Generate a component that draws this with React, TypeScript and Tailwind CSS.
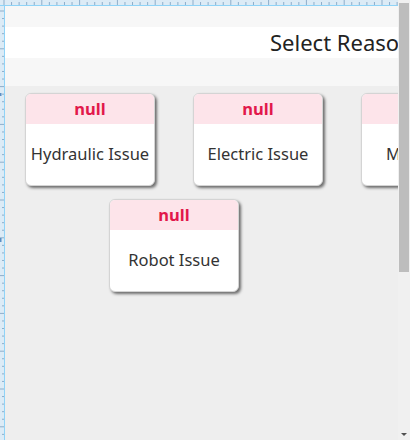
import React from 'react';

const reasons = [
  [{ label: 'Hydraulic Issue' }, { label: 'Electric Issue' }, { label: 'Misc Issue' }],
  [{ label: 'Robot Issue' }],
];

function TopRuler() {
  const ticks = [];
  for (let i = 0; i < 60; i++) {
    const x = 4 + i * 7.56;
    const major = i % 5 === 0;
    ticks.push(
      <line key={i} x1={x} x2={x} y1={major ? 0 : 2} y2={5} stroke="#8eaecb" strokeWidth={1} />,
    );
  }
  return (
    <svg width="410" height="6" className="block">
      <rect x="0" y="0" width="410" height="6" fill="#dcebf6" />
      {ticks}
      <line x1="0" x2="410" y1="5.5" y2="5.5" stroke="#8fd3f7" strokeWidth={1} />
    </svg>
  );
}

function LeftRuler() {
  const ticks = [];
  for (let i = 0; i < 100; i++) {
    const y = 5 + i * 7.56;
    const major = i % 5 === 0;
    ticks.push(
      <line key={i} y1={y} y2={y} x1={major ? 0 : 2} x2={4} stroke="#8eaecb" strokeWidth={1} />,
    );
  }
  return (
    <svg width="5" height="760" className="block">
      <rect x="0" y="0" width="5" height="760" fill="#dcebf6" />
      {ticks}
      <rect x="0" y="87" width="1.5" height="3" fill="#5b8fc4" />
      <rect x="0" y="232" width="1.5" height="4" fill="#5b8fc4" />
      <line x1="4.5" x2="4.5" y1="0" y2="760" stroke="#8fd3f7" strokeWidth={1} />
    </svg>
  );
}

function ReasonCard({ label }: { label: string }) {
  return (
    <div className="flex h-[93px] w-[130px] shrink-0 flex-col overflow-hidden rounded-[6px] border border-[#d4d4d4] bg-white shadow-[2px_2px_3px_rgba(0,0,0,0.55)]">
      <div className="flex h-[30px] items-center justify-center bg-[#fde4ea] text-[16.5px] font-bold text-[#e2184b]">
        null
      </div>
      <div className="flex flex-1 items-center justify-center whitespace-nowrap text-[16.5px] text-[#333333]">
        {label}
      </div>
    </div>
  );
}

function Scrollbar() {
  return (
    <div className="flex w-[12px] shrink-0 flex-col bg-[#f0f0f0]">
      <div className="mt-[3px] ml-px h-[269px] w-[10px] bg-[#bdbdbd]" />
      <div className="flex-1" />
      <div className="mb-[3px] flex justify-center">
        <svg width="8" height="5" viewBox="0 0 8 5">
          <path d="M1 1h6L4 4z" fill="#505050" />
        </svg>
      </div>
    </div>
  );
}

export default function App() {
  return (
    <div className="flex h-[440px] overflow-hidden bg-[#eeeeee] font-['Noto_Sans',sans-serif]">
      <div className="min-w-0 flex-1 overflow-hidden">
        <TopRuler />
        <div className="flex">
          <div className="w-[5px] shrink-0 overflow-hidden">
            <LeftRuler />
          </div>
          <div className="min-w-0 flex-1 overflow-hidden">
            <div className="h-[21px] bg-[#f7f7f7]" />
            <div className="h-[31px] whitespace-nowrap bg-white pl-[265px] text-[22px] leading-[31px] text-[#222222]">
              Select Reason Code
            </div>
            <div className="h-[28px] bg-[#f7f7f7]" />
            <div className="flex flex-col gap-[13px] pt-[7px]">
              <div className="flex gap-[38px] pl-[20px]">
                {reasons[0].map((r) => (
                  <ReasonCard key={r.label} label={r.label} />
                ))}
              </div>
              <div className="flex gap-[38px] pl-[104px]">
                {reasons[1].map((r) => (
                  <ReasonCard key={r.label} label={r.label} />
                ))}
              </div>
            </div>
          </div>
        </div>
      </div>
      <Scrollbar />
    </div>
  );
}
